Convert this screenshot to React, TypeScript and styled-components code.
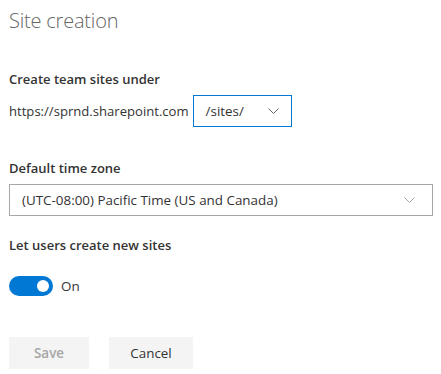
import styled, { createGlobalStyle } from "styled-components";

const GlobalStyle = createGlobalStyle`
  body {
    margin: 0;
    background: #fff;
    font-family: "Open Sans", "Noto Sans", sans-serif;
    color: #333;
  }
`;

const Page = styled.div`
  width: 441px;
  height: 374px;
  box-sizing: border-box;
  padding: 0 8px 0 9px;
  display: flex;
  flex-direction: column;
`;

const Title = styled.h1`
  margin: 7px 0 0;
  font-size: 20px;
  line-height: 28px;
  font-weight: 300;
  color: #666;
  letter-spacing: -0.2px;
`;

const Label = styled.div<{ $gap: number }>`
  margin-top: ${({ $gap }) => $gap}px;
  font-size: 13px;
  line-height: 20px;
  font-weight: 600;
  color: #333;
`;

const Row = styled.div`
  margin-top: 6px;
  display: flex;
  align-items: center;
  gap: 4px;
`;

const Prefix = styled.span`
  font-size: 13.1px;
  color: #333;
`;

const Dropdown = styled.div<{ $focused?: boolean; $width?: number }>`
  box-sizing: border-box;
  height: 32px;
  width: ${({ $width }) => ($width ? `${$width}px` : "100%")};
  display: flex;
  align-items: center;
  justify-content: space-between;
  padding: 0 12px 0 12px;
  border: 1px solid ${({ $focused }) => ($focused ? "#0078d4" : "#a6a6a6")};
  font-size: 13.4px;
  color: #333;
`;

const Chevron = styled.svg<{ $muted?: boolean }>`
  width: 11px;
  height: 6px;
  margin-right: ${({ $muted }) => ($muted ? "5px" : "0")};
  stroke: ${({ $muted }) => ($muted ? "#a6a6a6" : "#666")};
  fill: none;
  stroke-width: 1;
`;

const FullDropdown = styled(Dropdown)`
  margin-top: 6px;
`;

const ToggleRow = styled.div`
  margin-top: 21px;
  display: flex;
  align-items: center;
  gap: 8px;
`;

const Track = styled.div`
  width: 44px;
  height: 20px;
  border-radius: 10px;
  background: #0078d4;
  display: flex;
  align-items: center;
  justify-content: flex-end;
  padding-right: 4px;
  box-sizing: border-box;
`;

const Knob = styled.div`
  width: 12px;
  height: 12px;
  border-radius: 50%;
  background: #fff;
`;

const ToggleText = styled.span`
  font-size: 13.4px;
  color: #333;
`;

const Buttons = styled.div`
  margin-top: 41px;
  display: flex;
  gap: 20px;
`;

const Button = styled.button<{ $disabled?: boolean; $width: number }>`
  width: ${({ $width }) => $width}px;
  height: 32px;
  border: none;
  background: #f4f4f4;
  font-family: inherit;
  font-size: 13.4px;
  font-weight: ${({ $disabled }) => ($disabled ? 600 : 400)};
  color: ${({ $disabled }) => ($disabled ? "#a6a6a6" : "#333")};
  padding: 0;
`;

const ChevronIcon = ({ muted }: { muted?: boolean }) => (
  <Chevron $muted={muted} viewBox="0 0 11 6">
    <path d="M0.5 0.5 L5.5 5.5 L10.5 0.5" />
  </Chevron>
);

export default function App() {
  return (
    <>
      <GlobalStyle />
      <Page>
        <Title>Site creation</Title>
        <Label $gap={34}>Create team sites under</Label>
        <Row>
          <Prefix>https://sprnd.sharepoint.com</Prefix>
          <Dropdown $focused $width={99}>
            <span>/sites/</span>
            <ChevronIcon />
          </Dropdown>
        </Row>
        <Label $gap={31}>Default time zone</Label>
        <FullDropdown>
          <span>(UTC-08:00) Pacific Time (US and Canada)</span>
          <ChevronIcon muted />
        </FullDropdown>
        <Label $gap={19}>Let users create new sites</Label>
        <ToggleRow>
          <Track>
            <Knob />
          </Track>
          <ToggleText>On</ToggleText>
        </ToggleRow>
        <Buttons>
          <Button $disabled $width={80}>Save</Button>
          <Button $width={84}>Cancel</Button>
        </Buttons>
      </Page>
    </>
  );
}
